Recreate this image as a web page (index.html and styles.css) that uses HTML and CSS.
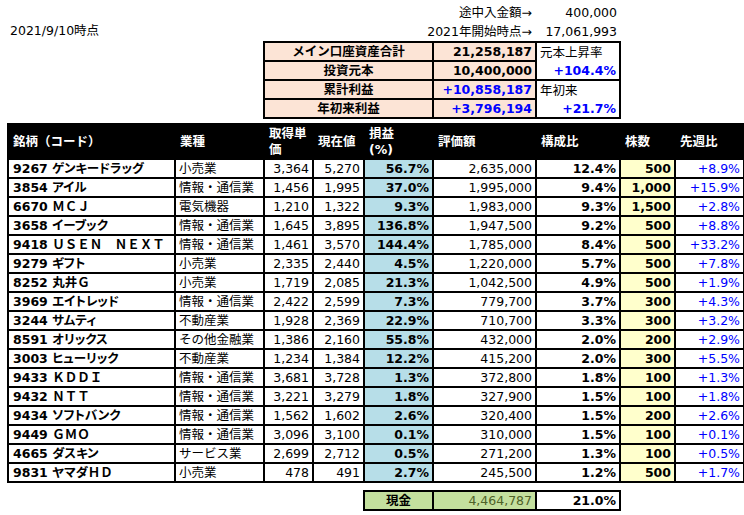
FILE: index.html
```html
<!DOCTYPE html>
<html lang="ja">
<head>
<meta charset="utf-8">
<title>Portfolio</title>
<link rel="stylesheet" href="styles.css">
</head>
<body>
<div class="top">
  <div class="info-label r1">途中入金額→</div>
  <div class="info-value r1">400,000</div>
  <div class="date">2021/9/10時点</div>
  <div class="info-label r2">2021年開始時点→</div>
  <div class="info-value r2">17,061,993</div>
  <table class="summary">
    <colgroup><col class="s-c1"><col class="s-c2"><col class="s-c3"></colgroup>
    <tr><td class="s-label">メイン口座資産合計</td><td class="s-val">21,258,187</td><td class="s-note">元本上昇率</td></tr>
    <tr><td class="s-label">投資元本</td><td class="s-val">10,400,000</td><td class="s-rate">+104.4%</td></tr>
    <tr><td class="s-label">累計利益</td><td class="s-val blue">+10,858,187</td><td class="s-note">年初来</td></tr>
    <tr><td class="s-label">年初来利益</td><td class="s-val blue">+3,796,194</td><td class="s-rate">+21.7%</td></tr>
  </table>
</div>

<table class="main">
  <colgroup>
    <col class="c-name"><col class="c-ind"><col class="c-cost"><col class="c-now"><col class="c-pl"><col class="c-val"><col class="c-ratio"><col class="c-qty"><col class="c-wk">
  </colgroup>
  <thead>
    <tr><th>銘柄（コード）</th><th>業種</th><th>取得単価</th><th>現在値</th><th>損益<br>(%)</th><th>評価額</th><th>構成比</th><th>株数</th><th>先週比</th></tr>
  </thead>
  <tbody>
    <tr><td class="name">9267 ゲンキードラッグ</td><td class="ind">小売業</td><td class="num">3,364</td><td class="num">5,270</td><td class="pl">56.7%</td><td class="num">2,635,000</td><td class="ratio">12.4%</td><td class="qty">500</td><td class="wk">+8.9%</td></tr>
    <tr><td class="name">3854 アイル</td><td class="ind">情報・通信業</td><td class="num">1,456</td><td class="num">1,995</td><td class="pl">37.0%</td><td class="num">1,995,000</td><td class="ratio">9.4%</td><td class="qty">1,000</td><td class="wk">+15.9%</td></tr>
    <tr><td class="name">6670 <span class="wide">ＭＣＪ</span></td><td class="ind">電気機器</td><td class="num">1,210</td><td class="num">1,322</td><td class="pl">9.3%</td><td class="num">1,983,000</td><td class="ratio">9.3%</td><td class="qty">1,500</td><td class="wk">+2.8%</td></tr>
    <tr><td class="name">3658 イーブック</td><td class="ind">情報・通信業</td><td class="num">1,645</td><td class="num">3,895</td><td class="pl">136.8%</td><td class="num">1,947,500</td><td class="ratio">9.2%</td><td class="qty">500</td><td class="wk">+8.8%</td></tr>
    <tr><td class="name">9418 <span class="wide">ＵＳＥＮ　ＮＥＸＴ</span></td><td class="ind">情報・通信業</td><td class="num">1,461</td><td class="num">3,570</td><td class="pl">144.4%</td><td class="num">1,785,000</td><td class="ratio">8.4%</td><td class="qty">500</td><td class="wk">+33.2%</td></tr>
    <tr><td class="name">9279 ギフト</td><td class="ind">小売業</td><td class="num">2,335</td><td class="num">2,440</td><td class="pl">4.5%</td><td class="num">1,220,000</td><td class="ratio">5.7%</td><td class="qty">500</td><td class="wk">+7.8%</td></tr>
    <tr><td class="name">8252 丸井<span class="wide">Ｇ</span></td><td class="ind">小売業</td><td class="num">1,719</td><td class="num">2,085</td><td class="pl">21.3%</td><td class="num">1,042,500</td><td class="ratio">4.9%</td><td class="qty">500</td><td class="wk">+1.9%</td></tr>
    <tr><td class="name">3969 エイトレッド</td><td class="ind">情報・通信業</td><td class="num">2,422</td><td class="num">2,599</td><td class="pl">7.3%</td><td class="num">779,700</td><td class="ratio">3.7%</td><td class="qty">300</td><td class="wk">+4.3%</td></tr>
    <tr><td class="name">3244 サムティ</td><td class="ind">不動産業</td><td class="num">1,928</td><td class="num">2,369</td><td class="pl">22.9%</td><td class="num">710,700</td><td class="ratio">3.3%</td><td class="qty">300</td><td class="wk">+3.2%</td></tr>
    <tr><td class="name">8591 オリックス</td><td class="ind">その他金融業</td><td class="num">1,386</td><td class="num">2,160</td><td class="pl">55.8%</td><td class="num">432,000</td><td class="ratio">2.0%</td><td class="qty">200</td><td class="wk">+2.9%</td></tr>
    <tr><td class="name">3003 ヒューリック</td><td class="ind">不動産業</td><td class="num">1,234</td><td class="num">1,384</td><td class="pl">12.2%</td><td class="num">415,200</td><td class="ratio">2.0%</td><td class="qty">300</td><td class="wk">+5.5%</td></tr>
    <tr><td class="name">9433 <span class="wide">ＫＤＤＩ</span></td><td class="ind">情報・通信業</td><td class="num">3,681</td><td class="num">3,728</td><td class="pl">1.3%</td><td class="num">372,800</td><td class="ratio">1.8%</td><td class="qty">100</td><td class="wk">+1.3%</td></tr>
    <tr><td class="name">9432 <span class="wide">ＮＴＴ</span></td><td class="ind">情報・通信業</td><td class="num">3,221</td><td class="num">3,279</td><td class="pl">1.8%</td><td class="num">327,900</td><td class="ratio">1.5%</td><td class="qty">100</td><td class="wk">+1.8%</td></tr>
    <tr><td class="name">9434 ソフトバンク</td><td class="ind">情報・通信業</td><td class="num">1,562</td><td class="num">1,602</td><td class="pl">2.6%</td><td class="num">320,400</td><td class="ratio">1.5%</td><td class="qty">200</td><td class="wk">+2.6%</td></tr>
    <tr><td class="name">9449 <span class="wide">ＧＭＯ</span></td><td class="ind">情報・通信業</td><td class="num">3,096</td><td class="num">3,100</td><td class="pl">0.1%</td><td class="num">310,000</td><td class="ratio">1.5%</td><td class="qty">100</td><td class="wk">+0.1%</td></tr>
    <tr><td class="name">4665 ダスキン</td><td class="ind">サービス業</td><td class="num">2,699</td><td class="num">2,712</td><td class="pl">0.5%</td><td class="num">271,200</td><td class="ratio">1.3%</td><td class="qty">100</td><td class="wk">+0.5%</td></tr>
    <tr><td class="name">9831 ヤマダ<span class="wide">ＨＤ</span></td><td class="ind">小売業</td><td class="num">478</td><td class="num">491</td><td class="pl">2.7%</td><td class="num">245,500</td><td class="ratio">1.2%</td><td class="qty">500</td><td class="wk">+1.7%</td></tr>
  </tbody>
</table>

<div class="cash-row">
  <table class="cash">
    <colgroup><col class="k-c1"><col class="k-c2"><col class="k-c3"></colgroup>
    <tr><td class="k-label">現金</td><td class="k-val">4,464,787</td><td class="k-ratio">21.0%</td></tr>
  </table>
</div>
</body>
</html>
```

FILE: styles.css
```css
body {
  margin: 0;
  background: #ffffff;
  color: #000000;
  font-family: "DejaVu Sans", "Noto Sans CJK JP", sans-serif;
  font-size: 12.5px;
}

table {
  border-collapse: collapse;
  table-layout: fixed;
}

td, th {
  padding: 0 3px;
  white-space: nowrap;
  overflow: hidden;
}

.blue { color: #0000ff; }

/* ---------- top area ---------- */
.top {
  display: grid;
  grid-template-columns: 263px 169px 103px 84px;
  grid-template-rows: 19px 19px auto;
  padding-top: 3px;
}

.info-label {
  grid-column: 2 / 4;
  text-align: right;
  padding-right: 3px;
  line-height: 19px;
}

.info-value {
  grid-column: 4;
  text-align: right;
  padding-right: 2px;
  line-height: 19px;
}

.r1 { grid-row: 1; }
.r2 { grid-row: 2; }

.date {
  grid-column: 1;
  grid-row: 2;
  padding-left: 10px;
  line-height: 17px;
}

.summary {
  grid-column: 2 / 5;
  grid-row: 3;
  width: 357px;
}

.s-c1 { width: 169px; }
.s-c2 { width: 103px; }
.s-c3 { width: 84px; }

.summary tr { height: 19px; }

.summary td {
  border: 2px solid #000;
  line-height: 15px;
}

.s-label {
  background: #fce4d6;
  font-weight: bold;
  text-align: center;
}

.s-val {
  background: #fce4d6;
  font-weight: bold;
  text-align: right;
}

.summary td.s-note {
  text-align: left;
  border-bottom: none;
}

.summary td.s-rate {
  text-align: right;
  color: #0000ff;
  font-weight: bold;
  border-top: none;
}

/* ---------- main table ---------- */
.main {
  margin-top: 4px;
  margin-left: 7px;
  width: 737px;
}

.c-name { width: 167px; }
.c-ind { width: 89px; }
.c-cost { width: 49px; }
.c-now { width: 51px; }
.c-pl { width: 69px; }
.c-val { width: 103px; }
.c-ratio { width: 84px; }
.c-qty { width: 55px; }
.c-wk { width: 69px; }

.main thead tr { height: 35px; }

.main th {
  background: #000;
  color: #fff;
  border: 2px solid #000;
  font-weight: bold;
  text-align: left;
  line-height: 16px;
  white-space: normal;
  vertical-align: middle;
  padding: 0 4px;
}

.main tbody tr { height: 19px; }

.main td {
  border: 2px solid #000;
  line-height: 15px;
}

.name {
  font-weight: bold;
  padding-left: 4px;
  font-feature-settings: "palt";
}

.name .wide {
  font-feature-settings: normal;
}

.ind { text-align: left; }

.num { text-align: right; }

.pl {
  background: #b7dee8;
  font-weight: bold;
  text-align: right;
}

.ratio {
  font-weight: bold;
  text-align: right;
}

.qty {
  background: #ffffcc;
  font-weight: bold;
  text-align: right;
}

.wk {
  color: #0000ff;
  text-align: right;
}

/* ---------- cash row ---------- */
.cash-row {
  padding-left: 363px;
  padding-top: 7px;
}

.cash { width: 257px; }

.k-c1 { width: 69px; }
.k-c2 { width: 103px; }
.k-c3 { width: 84px; }

.cash tr { height: 19px; }

.cash td {
  border: 2px solid #000;
  line-height: 15px;
}

.k-label {
  background: #c4e09e;
  font-weight: bold;
  text-align: center;
}

.k-val {
  background: #c4e09e;
  color: #4f6228;
  text-align: right;
}

.k-ratio {
  font-weight: bold;
  text-align: right;
}
```
